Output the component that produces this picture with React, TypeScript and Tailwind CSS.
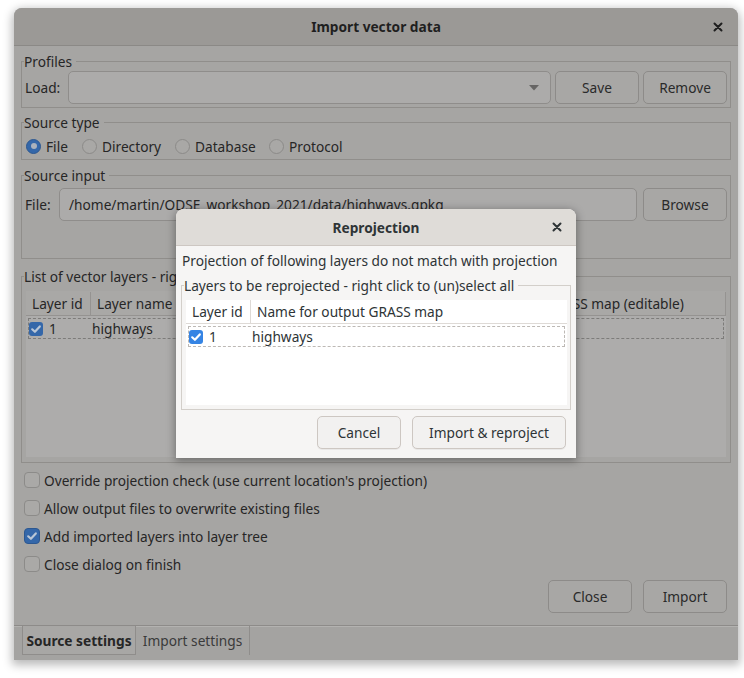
import React from "react";

const FONT = { fontFamily: '"Noto Sans", "Open Sans", sans-serif' };

function CheckMark() {
  return (
    <svg viewBox="0 0 14 14" className="w-full h-full">
      <path d="M3.2 7.3 L5.9 9.8 L10.8 4.4" fill="none" stroke="currentColor" strokeWidth="2.2" strokeLinecap="round" strokeLinejoin="round" />
    </svg>
  );
}

function CloseX({ color }: { color: string }) {
  return (
    <svg viewBox="0 0 10 10" className="w-[10px] h-[10px]">
      <path d="M1.5 1.5 L8.5 8.5 M8.5 1.5 L1.5 8.5" stroke={color} strokeWidth="2" strokeLinecap="round" />
    </svg>
  );
}

function MainCheck({ checked }: { checked?: boolean }) {
  return checked ? (
    <div className="w-[16px] h-[16px] rounded-[4px] bg-[#3467a9] border border-[#2d5891] text-[#b9c6d6] flex items-center justify-center">
      <CheckMark />
    </div>
  ) : (
    <div className="w-[16px] h-[16px] rounded-[4px] bg-[#aaa9a7] border border-[#8c8b89]" />
  );
}

function MainRadio({ checked }: { checked?: boolean }) {
  return checked ? (
    <div className="w-[15px] h-[15px] rounded-full bg-[#3467a9] border border-[#2d5891] flex items-center justify-center">
      <div className="w-[6px] h-[6px] rounded-full bg-[#aab2bd]" />
    </div>
  ) : (
    <div className="w-[15px] h-[15px] rounded-full bg-[#a9a8a6] border border-[#8c8b89]" />
  );
}

function MainBtn({ children }: { children: React.ReactNode }) {
  return (
    <div className="w-[84px] h-[33px] rounded-[5px] border border-[#8d8b89] bg-[#a8a7a5] flex items-center justify-center text-[#2a2a2a] shrink-0">
      {children}
    </div>
  );
}

function DlgBtn({ children, w }: { children: React.ReactNode; w: string }) {
  return (
    <div className={`${w} h-[33px] rounded-[5px] border border-[#cdc7c2] bg-[#f2f1f0] flex items-center justify-center text-[#2e3436] shrink-0 shadow-[0_1px_0_rgba(0,0,0,0.05)]`}>
      {children}
    </div>
  );
}

export default function App() {
  return (
    <div className="w-[744px] h-[678px] bg-white relative overflow-hidden text-[13.7px] leading-[19px]" style={FONT}>
      {/* Main window */}
      <div className="ml-[14px] mt-[8px] w-[724px] h-[652px] rounded-t-[8px] bg-[#a6a5a3] shadow-[0_3px_10px_2px_rgba(0,0,0,0.28)] flex flex-col text-[#262626]">
        {/* title bar */}
        <div className="h-[38px] shrink-0 rounded-t-[8px] bg-[#9b9996] border-b border-[#8b8986] flex items-center relative">
          <div className="flex-1 text-center font-bold text-[#1f1f1f]">Import vector data</div>
          <div className="absolute right-[15px] top-[14px]">
            <CloseX color="#1f1f1f" />
          </div>
        </div>

        {/* body */}
        <div className="flex-1 flex flex-col px-[7px]">
          {/* Profiles */}
          <fieldset className="mt-[6px] border border-[#908e8b] pl-[2px] pr-[3px] pb-[3px]">
            <legend className="pr-[4px] leading-[19px]">Profiles</legend>
            <div className="flex items-center h-[33px] gap-[4px]">
              <div className="w-[40px] pl-[1px]">Load:</div>
              <div className="flex-1 h-[33px] rounded-[5px] border border-[#8f8d8b] bg-[#acabaa] flex items-center justify-end pr-[11px]">
                <svg viewBox="0 0 10 6" className="w-[10px] h-[6px]">
                  <path d="M0 0 L10 0 L5 5.5 Z" fill="#666564" />
                </svg>
              </div>
              <MainBtn>Save</MainBtn>
              <MainBtn>Remove</MainBtn>
            </div>
          </fieldset>

          {/* Source type */}
          <fieldset className="mt-[5px] border border-[#908e8b] pl-[2px] pr-[3px]">
            <legend className="pr-[4px] leading-[19px]">Source type</legend>
            <div className="flex items-center h-[27px] pt-[1px]">
              <div className="flex items-center gap-[5px] ml-[2px] w-[56px]">
                <MainRadio checked />
                <span>File</span>
              </div>
              <div className="flex items-center gap-[5px] w-[93px]">
                <MainRadio />
                <span>Directory</span>
              </div>
              <div className="flex items-center gap-[5px] w-[94px]">
                <MainRadio />
                <span>Database</span>
              </div>
              <div className="flex items-center gap-[5px]">
                <MainRadio />
                <span>Protocol</span>
              </div>
            </div>
          </fieldset>

          {/* Source input */}
          <fieldset className="mt-[6px] border border-[#908e8b] pl-[2px] pr-[3px] pb-[37px]">
            <legend className="pr-[4px] leading-[19px]">Source input</legend>
            <div className="flex items-center h-[33px] mt-[3px]">
              <div className="w-[35px] pl-[1px]">File:</div>
              <div className="flex-1 h-[33px] rounded-[5px] border border-[#8f8d8b] bg-[#acabaa] flex items-center pl-[9px] whitespace-nowrap overflow-hidden">
                /home/martin/ODSE_workshop_2021/data/highways.gpkg
              </div>
              <div className="ml-[6px]">
                <MainBtn>Browse</MainBtn>
              </div>
            </div>
          </fieldset>

          {/* List of vector layers */}
          <fieldset className="mt-[8px] border border-[#908e8b] px-[4px] pb-[5px]">
            <legend className="-ml-[2px] pr-[4px] leading-[19px] whitespace-nowrap">
              List of vector layers - right click to (un)select all
            </legend>
            <div className="mt-[5px] h-[166px] bg-[#adacab] flex flex-col">
              <div className="h-[25px] shrink-0 flex items-stretch bg-[#a9a8a6] border-b border-[#959391] pt-[1px]">
                <div className="w-[65px] pl-[6px] flex items-center border-r border-[#959391]">Layer id</div>
                <div className="w-[336px] pl-[6px] flex items-center border-r border-[#959391]">Layer name</div>
                <div className="flex-1 pl-[7px] flex items-center border-r border-[#959391]">Name for output GRASS map (editable)</div>
              </div>
              <div className="mt-[2px] mx-[2px] h-[21px] border border-dashed border-[#7d7c7a] flex items-center">
                <div className="w-[63px] flex items-center">
                  <div className="w-[14px] h-[14px] rounded-[3px] bg-[#3467a9] text-[#b9c6d6] flex items-center justify-center">
                    <CheckMark />
                  </div>
                  <span className="ml-[6px]">1</span>
                </div>
                <div>highways</div>
              </div>
            </div>
          </fieldset>

          {/* options */}
          <div className="mt-[3px] flex flex-col pl-[3px]">
            {[
              ["Override projection check (use current location's projection)", false],
              ["Allow output files to overwrite existing files", false],
              ["Add imported layers into layer tree", true],
              ["Close dialog on finish", false],
            ].map(([label, c]) => (
              <div key={label as string} className="h-[28px] flex items-center gap-[4px]">
                <MainCheck checked={c as boolean} />
                <span>{label as string}</span>
              </div>
            ))}
          </div>

          <div className="mt-[2px] flex justify-end gap-[11px] pr-[4px]">
            <MainBtn>Close</MainBtn>
            <MainBtn>Import</MainBtn>
          </div>
          <div className="flex-1" />
        </div>

        {/* tabs */}
        <div className="h-[35px] shrink-0 border-t border-[#8d8b89] shadow-[inset_0_1px_0_#b3b2b0] flex pl-[8px] pb-[5px] bg-[#a4a3a1]">
          <div className="w-[114px] border-x border-b border-[#8f8d8b] bg-[#a8a7a5] flex items-center justify-center font-bold text-[#262626]">
            Source settings
          </div>
          <div className="w-[114px] border-r border-[#8f8d8b] flex items-center justify-center text-[#3a3a3a]">
            Import settings
          </div>
        </div>
      </div>

      {/* Reprojection dialog */}
      <div className="absolute left-[176px] top-[209px] w-[400px] h-[249px] rounded-t-[8px] bg-[#f6f5f4] shadow-[0_2px_9px_1px_rgba(0,0,0,0.35)] flex flex-col text-[#2e3436]">
        <div className="h-[37px] shrink-0 rounded-t-[8px] bg-[#dfdcd8] border-b border-[#cdc7c2] flex items-center relative">
          <div className="flex-1 text-center font-bold">Reprojection</div>
          <div className="absolute right-[14px] top-[13px]">
            <CloseX color="#2e3436" />
          </div>
        </div>
        <div className="flex flex-col px-[5px]">
          <div className="mt-[5px] pl-[1px] whitespace-nowrap">Projection of following layers do not match with projection</div>
          <fieldset className="mt-[6px] border border-[#d3cfca] pl-[4px] pr-[3px] pb-[4px]">
            <legend className="-ml-[2px] pr-[4px] leading-[19px] whitespace-nowrap">
              Layers to be reprojected - right click to (un)select all
            </legend>
            <div className="mt-[5px] h-[105px] bg-white flex flex-col">
              <div className="h-[24px] shrink-0 flex items-stretch border-b border-[#dedad6]">
                <div className="w-[65px] pl-[6px] flex items-center border-r border-[#dedad6]">Layer id</div>
                <div className="flex-1 pl-[6px] flex items-center">Name for output GRASS map</div>
              </div>
              <div className="mt-[2px] mx-[2px] h-[21px] border border-dashed border-[#bdb9b5] flex items-center">
                <div className="w-[63px] flex items-center">
                  <div className="w-[14px] h-[14px] rounded-[3px] bg-[#3584e4] text-white flex items-center justify-center">
                    <CheckMark />
                  </div>
                  <span className="ml-[6px]">1</span>
                </div>
                <div>highways</div>
              </div>
            </div>
          </fieldset>
          <div className="mt-[6px] flex justify-end gap-[11px] pr-[5px]">
            <DlgBtn w="w-[84px]">Cancel</DlgBtn>
            <DlgBtn w="w-[154px]">Import &amp; reproject</DlgBtn>
          </div>
        </div>
      </div>
    </div>
  );
}
